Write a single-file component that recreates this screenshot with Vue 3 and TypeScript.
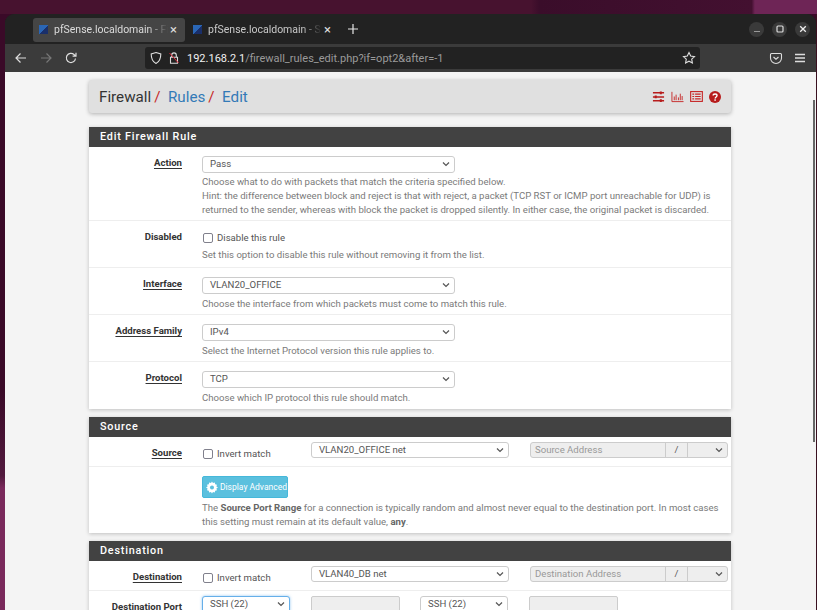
<template>
  <div class="desktop">
    <div class="window">
      <header class="tabbar">
        <div class="tab active">
          <span class="favicon"></span>
          <span class="tab-title">pfSense.localdomain - Firewall</span>
          <span class="tab-close">×</span>
        </div>
        <div class="tab">
          <span class="favicon"></span>
          <span class="tab-title">pfSense.localdomain - System</span>
          <span class="tab-close">×</span>
        </div>
        <svg class="new-tab" width="12" height="12" viewBox="0 0 12 12"><path d="M6 1v10M1 6h10" stroke="#e8e8e8" stroke-width="1.2" /></svg>
        <div class="win-controls">
          <span class="win-btn"><svg width="14" height="14" viewBox="0 0 14 14"><path d="M4 9.5h6" stroke="#999" stroke-width="1.2" /></svg></span>
          <span class="win-btn"><svg width="14" height="14" viewBox="0 0 14 14"><rect x="4" y="4" width="6" height="6" rx="1" fill="none" stroke="#ddd" stroke-width="1.2" /></svg></span>
          <span class="win-btn"><svg width="14" height="14" viewBox="0 0 14 14"><path d="M4.2 4.2l5.6 5.6M9.800 4.200l-5.600 5.600" stroke="#eee" stroke-width="1.300" /></svg></span>
        </div>
      </header>

      <nav class="toolbar">
        <svg class="nav-icon" width="14" height="14" viewBox="0 0 14 14"><path d="M12 7H2M6.500 2.500L2 7l4.500 4.500" fill="none" stroke="#ddd" stroke-width="1.200" /></svg>
        <svg class="nav-icon" width="14" height="14" viewBox="0 0 14 14"><path d="M2 7h10M7.500 2.500L12 7l-4.500 4.500" fill="none" stroke="#777" stroke-width="1.200" /></svg>
        <svg class="nav-icon" width="14" height="14" viewBox="0 0 14 14"><path d="M11.500 7.500A4.600 4.600 0 1 1 10 3.500L11.800 5M12 1.800V5.200H8.600" fill="none" stroke="#ddd" stroke-width="1.200" /></svg>
        <div class="urlbar">
          <svg class="shield" width="14" height="14" viewBox="0 0 14 14"><path d="M7 1.500l4.800 1.500c0 4.500-1.500 7.800-4.800 9.500C3.700 10.800 2.200 7.500 2.200 3z" fill="none" stroke="#ddd" stroke-width="1.100" /></svg>
          <svg class="lock" width="14" height="14" viewBox="0 0 14 14">
            <path d="M4.700 6V4.200a2.300 2.300 0 0 1 4.600 0V6M3.500 6.300h7v6h-7z" fill="none" stroke="#ddd" stroke-width="1.100" />
            <path d="M2.500 2l9 10" stroke="#e0293a" stroke-width="1" />
          </svg>
          <span class="url"><b>192.168.2.1</b>/firewall_rules_edit.php?if=opt2&amp;after=-1</span>
          <svg class="star" width="14" height="14" viewBox="0 0 14 14"><path d="M7 1.600l1.700 3.500 3.800.5-2.800 2.600.7 3.800L7 10.200 3.600 12l.7-3.800L1.500 5.600l3.800-.5z" fill="none" stroke="#ddd" stroke-width="1.100" /></svg>
        </div>
        <svg class="pocket" width="14" height="14" viewBox="0 0 14 14"><path d="M2.500 2.500h9a1 1 0 0 1 1 1V7a5.500 5.500 0 0 1-11 0V3.500a1 1 0 0 1 1-1z" fill="none" stroke="#ddd" stroke-width="1.100" /><path d="M4.500 6L7 8.300 9.500 6" fill="none" stroke="#ddd" stroke-width="1.200" /></svg>
        <svg class="menu" width="14" height="14" viewBox="0 0 14 14"><path d="M2 3.500h10M2 7h10M2 10.500h10" stroke="#ddd" stroke-width="1.300" /></svg>
      </nav>

      <main class="page">
        <div class="content">
          <div class="title-bar">
            <h1>Firewall<i>/</i><a>Rules</a><i>/</i><a>Edit</a></h1>
            <div class="title-icons">
              <svg width="13" height="13" viewBox="0 0 14 14"><path d="M1 3h12M1 7.500h12M1 11.500h12" stroke="#b71c1c" stroke-width="1.600" /><path d="M9.500 1.500v3M4 6v3M9.500 10v3" stroke="#b71c1c" stroke-width="2.200" /></svg>
              <svg width="13" height="13" viewBox="0 0 13 14"><path d="M.5 2v10.500H13" fill="none" stroke="#c62828" /><path d="M3 7v4M5 5v6M7.500 8v3M9.500 4v7M11.500 6.500V11" stroke="#c62828" /></svg>
              <svg width="13" height="13" viewBox="0 0 14 14"><rect x=".7" y="1.700" width="12.600" height="10.600" fill="none" stroke="#c62828" stroke-width="1.200" /><path d="M5.500 4.500h6M5.500 7h6M5.500 9.500h6M2.500 4.500h2M2.500 7h2M2.500 9.500h2" stroke="#c62828" stroke-width="1.200" /></svg>
              <svg width="12" height="12" viewBox="0 0 13 13"><circle cx="6.500" cy="6.500" r="6.500" fill="#b71c1c" /><path d="M4.500 5c0-2.400 4.200-2.400 4.200 0 0 1.500-2 1.500-2 3" fill="none" stroke="#fff" stroke-width="1.500" /><rect x="5.800" y="9" width="1.600" height="1.600" fill="#fff" /></svg>
            </div>
          </div>

          <section class="panel">
            <h2>Edit Firewall Rule</h2>
            <div v-for="row in ruleRows" :key="row.label" class="row" :style="{ height: row.height + 'px' }">
              <label :class="{ required: row.required }">{{ row.label }}</label>
              <div class="field">
                <div v-if="row.select" class="select wide">
                  {{ row.select }}<svg class="chev" width="8" height="6" viewBox="0 0 8 6"><path d="M1 1.500L4 4.500l3-3" fill="none" stroke="#555" stroke-width="1.200" /></svg>
                </div>
                <div v-else class="check"><input type="checkbox" /><span>{{ row.check }}</span></div>
                <p class="help"><template v-for="line in row.help" :key="line">{{ line }}<br /></template></p>
              </div>
            </div>
          </section>

          <section class="panel">
            <h2>Source</h2>
            <div class="row addr-row">
              <label class="required">Source</label>
              <div class="check invert"><input type="checkbox" /><span>Invert match</span></div>
              <div class="select net">VLAN20_OFFICE net<svg class="chev" width="8" height="6" viewBox="0 0 8 6"><path d="M1 1.500L4 4.500l3-3" fill="none" stroke="#555" stroke-width="1.200" /></svg></div>
              <div class="addr-group">
                <span class="addr-input">Source Address</span>
                <span class="addr-slash">/</span>
                <span class="addr-mask"><svg class="chev" width="8" height="6" viewBox="0 0 8 6"><path d="M1 1.500L4 4.500l3-3" fill="none" stroke="#555" stroke-width="1.200" /></svg></span>
              </div>
            </div>
            <div class="row adv-row">
              <label></label>
              <div class="field">
                <button class="adv-btn">
                  <svg width="13" height="13" viewBox="0 0 12 12"><path d="M6 0l1 1.600 1.800-.6.400 1.800 1.800.4-.6 1.800L12 6l-1.600 1 .6 1.800-1.800.4-.4 1.800L7 10.400 6 12l-1-1.600-1.800.6-.4-1.800-1.800-.4.6-1.800L0 6l1.600-1L1 3.200l1.800-.4.400-1.800L5 1.600z" fill="#fff" /><circle cx="6" cy="6" r="2" fill="#5bc0de" /></svg>
                  <span>Display Advanced</span>
                </button>
                <p class="help">The <b>Source Port Range</b> for a connection is typically random and almost never equal to the destination port. In most cases<br />this setting must remain at its default value, <b>any</b>.</p>
              </div>
            </div>
          </section>

          <section class="panel">
            <h2>Destination</h2>
            <div class="row addr-row">
              <label class="required">Destination</label>
              <div class="check invert"><input type="checkbox" /><span>Invert match</span></div>
              <div class="select net">VLAN40_DB net<svg class="chev" width="8" height="6" viewBox="0 0 8 6"><path d="M1 1.500L4 4.500l3-3" fill="none" stroke="#555" stroke-width="1.200" /></svg></div>
              <div class="addr-group">
                <span class="addr-input">Destination Address</span>
                <span class="addr-slash">/</span>
                <span class="addr-mask"><svg class="chev" width="8" height="6" viewBox="0 0 8 6"><path d="M1 1.500L4 4.500l3-3" fill="none" stroke="#555" stroke-width="1.200" /></svg></span>
              </div>
            </div>
            <div class="row port-row">
              <label class="plain">Destination Port</label>
              <div class="select port focus">SSH (22)<svg class="chev" width="8" height="6" viewBox="0 0 8 6"><path d="M1 1.500L4 4.500l3-3" fill="none" stroke="#555" stroke-width="1.200" /></svg></div>
              <span class="port-input"></span>
              <div class="select port">SSH (22)<svg class="chev" width="8" height="6" viewBox="0 0 8 6"><path d="M1 1.500L4 4.500l3-3" fill="none" stroke="#555" stroke-width="1.200" /></svg></div>
              <span class="port-input last"></span>
            </div>
          </section>
        </div>
        <span class="scroll-thumb"></span>
      </main>
    </div>
  </div>
</template>

<script setup lang="ts">
interface IRuleRow {
  label: string;
  required: boolean;
  height: number;
  select?: string;
  check?: string;
  help: string[];
}

const ruleRows: IRuleRow[] = [
  {
    label: 'Action',
    required: true,
    height: 74,
    select: 'Pass',
    help: [
      'Choose what to do with packets that match the criteria specified below.',
      'Hint: the difference between block and reject is that with reject, a packet (TCP RST or ICMP port unreachable for UDP) is',
      'returned to the sender, whereas with block the packet is dropped silently. In either case, the original packet is discarded.'
    ]
  },
  {
    label: 'Disabled',
    required: false,
    height: 47,
    check: 'Disable this rule',
    help: ['Set this option to disable this rule without removing it from the list.']
  },
  {
    label: 'Interface',
    required: true,
    height: 47,
    select: 'VLAN20_OFFICE',
    help: ['Choose the interface from which packets must come to match this rule.']
  },
  {
    label: 'Address Family',
    required: true,
    height: 47,
    select: 'IPv4',
    help: ['Select the Internet Protocol version this rule applies to.']
  },
  {
    label: 'Protocol',
    required: true,
    height: 47,
    select: 'TCP',
    help: ['Choose which IP protocol this rule should match.']
  }
];
</script>

<style>
html,
body {
  margin: 0;
  height: 100%;
  overflow: hidden;
  background: #3a0a28;
}
</style>

<style scoped>
.desktop {
  height: 610px;
  width: 817px;
  box-sizing: border-box;
  padding: 14px 1px 0 5px;
  overflow: hidden;
  background:
    linear-gradient(90deg, #47122f 0 65%, #3a0d2a 66%, #431030 92%, #6e2556 92.4%) top / 100% 14px no-repeat,
    linear-gradient(90deg, transparent 0 816px, #3a1020 816px),
    linear-gradient(180deg, #3a0a28 0 64%, #521a3e 78%, #7a2a5c 80% 100%);
  font-family: Roboto, "Liberation Sans", sans-serif;
}

.window {
  height: 596px;
  display: flex;
  flex-direction: column;
  border-radius: 9px 9px 0 0;
  overflow: hidden;
  background: #222;
}

.tabbar {
  height: 30px;
  flex: none;
  display: flex;
  align-items: center;
  padding-left: 28px;
  background: #222;
}

.tab {
  width: 152px;
  height: 24px;
  box-sizing: border-box;
  margin-top: 1px;
  display: flex;
  align-items: center;
  padding: 0 8px 0 6px;
  border-radius: 3px;
  color: #c9c9c9;
  font-size: 10.5px;
}

.tab.active {
  background: #454545;
  color: #dcdcdc;
}

.tab + .tab {
  margin-left: 2px;
}

.favicon {
  flex: none;
  width: 9px;
  height: 9px;
  margin-right: 6px;
  background: linear-gradient(135deg, #2a66b5 0 55%, #1a2f6a 55%);
}

.tab-title {
  flex: 1;
  min-width: 0;
  overflow: hidden;
  white-space: nowrap;
  -webkit-mask-image: linear-gradient(90deg, #000 82%, transparent 100%);
  mask-image: linear-gradient(90deg, #000 82%, transparent 100%);
}

.tab-close {
  margin-left: 2px;
  color: #ddd;
  font-size: 13px;
  line-height: 1;
}

.new-tab {
  margin-left: 8px;
}

.win-controls {
  margin-left: auto;
  display: flex;
  gap: 8px;
  padding-right: 6px;
}

.win-btn {
  width: 15px;
  height: 15px;
  display: flex;
  align-items: center;
  justify-content: center;
  border-radius: 50%;
  background: #3a3a3a;
}

.toolbar {
  height: 28px;
  flex: none;
  display: flex;
  align-items: center;
  padding-left: 9px;
  background: #3b3b3b;
}

.nav-icon {
  flex: none;
  margin-right: 11px;
}

.urlbar {
  width: 555px;
  height: 22px;
  box-sizing: border-box;
  margin-left: 56px;
  display: flex;
  align-items: center;
  padding: 0 4px;
  border-radius: 3px;
  background: #222;
}

.shield {
  margin-right: 4px;
}

.urlbar .lock {
  margin-right: 6px;
}

.url {
  flex: 1;
  color: #9a9a9a;
  font-size: 11px;
}

.url b {
  color: #f0f0f0;
  font-weight: 400;
}

.pocket {
  margin-left: 69px;
}

.menu {
  margin-left: 10px;
}

.page {
  position: relative;
  flex: 1;
  min-height: 0;
  overflow: hidden;
  background: #f4f4f4;
}

.content {
  width: 642px;
  margin-left: 84px;
  padding-top: 8px;
}

.title-bar {
  height: 33px;
  display: flex;
  align-items: center;
  justify-content: space-between;
  padding: 0 10px;
  margin-bottom: 14px;
  border-radius: 3px;
  background: #e0e0e0;
  box-shadow: 0 1px 4px rgba(0, 0, 0, 0.28);
}

h1 {
  margin: 0;
  color: #333;
  font-size: 15.2px;
  font-weight: 400;
}

h1 i {
  margin: 0 7.5px 0 3px;
  color: #c62828;
  font-style: normal;
}

h1 a {
  color: #337ab7;
}

.title-icons {
  display: flex;
  align-items: center;
  gap: 6px;
}

.panel {
  margin-bottom: 8px;
  background: #fff;
  box-shadow: 0 1px 4px rgba(0, 0, 0, 0.22);
}

h2 {
  height: 20px;
  margin: 0;
  padding-left: 11px;
  background: #424242;
  color: #fff;
  font-size: 10.8px;
  font-weight: 500;
  line-height: 20px;
  letter-spacing: 0.8px;
}

.row {
  display: flex;
  box-sizing: border-box;
  border-bottom: 1px solid #eee;
  color: #444;
  font-size: 9.6px;
}

.row:last-child {
  border-bottom: none;
}

.row > label {
  flex: none;
  width: 93px;
  margin-top: 9px;
  align-self: flex-start;
  text-align: right;
  color: #333;
  font-weight: 700;
  line-height: 13px;
}

.row > label.required {
  text-decoration: underline;
  text-underline-offset: 2px;
}

.field {
  margin-left: 20px;
  padding-top: 9px;
}

.select {
  position: relative;
  height: 17px;
  box-sizing: border-box;
  padding-left: 7px;
  border: 1px solid #ccc;
  border-radius: 3px;
  background: #fff;
  color: #555;
  font-size: 9.6px;
  line-height: 14px;
}

.select.wide {
  width: 253px;
}

.chev {
  position: absolute;
  right: 4px;
  top: 4px;
}

.help {
  margin: 3px 0 0;
  color: #7a7a7a;
  font-size: 9.6px;
  line-height: 14px;
  white-space: nowrap;
}

h2 + .row .help {
  margin-top: 2px;
}

.help b {
  color: #666;
}

.check {
  display: flex;
  align-items: center;
  height: 15px;
  color: #555;
  font-size: 9.6px;
}

.check span {
  margin-top: -1px;
}

.check input {
  appearance: none;
  width: 10px;
  height: 10px;
  margin: 1px 4px 0 1px;
  border: 1px solid #80808c;
  border-radius: 2px;
  background: #fff;
}

.addr-row {
  height: 30px;
  align-items: flex-start;
}

.invert {
  flex: none;
  width: 109px;
  margin: 9px 0 0 20px;
}

.select.net {
  flex: none;
  width: 198px;
  height: 16px;
  margin-top: 5px;
}

.addr-group {
  flex: none;
  width: 198px;
  height: 16px;
  margin: 5px 0 0 21px;
  display: flex;
  box-sizing: border-box;
  border: 1px solid #ccc;
  border-radius: 3px;
  background: #eee;
  color: #999;
  font-size: 9.6px;
  line-height: 14px;
}

.addr-input {
  width: 135px;
  padding-left: 4px;
  box-sizing: border-box;
  border-right: 1px solid #ccc;
}

.addr-slash {
  width: 21px;
  text-align: center;
  color: #555;
  border-right: 1px solid #ccc;
}

.addr-mask {
  position: relative;
  flex: 1;
}

.adv-row {
  height: 66px;
}

.adv-row > label {
  margin-top: 0;
}

.adv-row .field {
  padding-top: 9px;
}

.adv-btn {
  width: 86px;
  height: 22px;
  display: flex;
  align-items: center;
  gap: 2px;
  padding: 0 0 0 3px;
  border: 1px solid #46b8da;
  border-radius: 2px;
  background: #5bc0de;
  color: #fff;
  font-family: inherit;
  font-size: 8.5px;
  white-space: nowrap;
}

.adv-row .help {
  margin-top: 3px;
}

.port-row {
  height: 21px;
  align-items: flex-start;
}

.port-row > label {
  margin-top: 9px;
}

.select.port {
  flex: none;
  width: 88px;
  margin: 5px 0 0 20px;
}

.select.port.focus {
  border-color: #66afe9;
  box-shadow: 0 0 3px rgba(102, 175, 233, 0.7);
}

.port-input {
  flex: none;
  width: 89px;
  height: 17px;
  margin: 5px 0 0 21px;
  box-sizing: border-box;
  border: 1px solid #ccc;
  border-radius: 2px;
  background: #eee;
}

.scroll-thumb {
  position: absolute;
  top: 28px;
  right: 1px;
  width: 2px;
  height: 342px;
  background: #666;
}
</style>
